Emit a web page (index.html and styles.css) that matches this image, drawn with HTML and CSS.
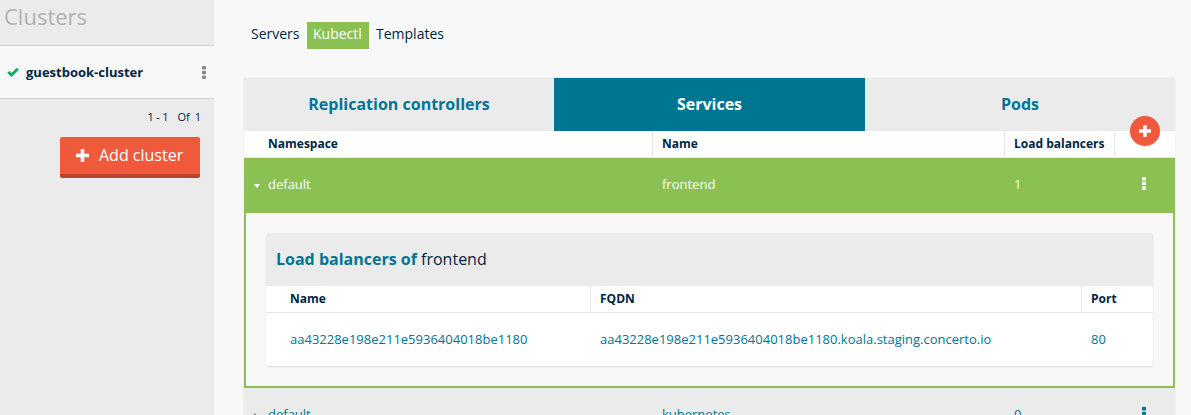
FILE: index.html
```html
<!DOCTYPE html>
<html lang="en">
<head>
<meta charset="utf-8">
<title>Clusters</title>
<link rel="stylesheet" href="styles.css">
</head>
<body>
<div class="app">
  <aside class="sidebar">
    <h1 class="sidebar-title">Clusters</h1>
    <div class="cluster">
      <svg class="check" viewBox="0 0 12 10" width="12" height="10"><path d="M1.2 5 4.5 8.1 10.8 1.7" fill="none" stroke="#0fae68" stroke-width="2.9"/></svg>
      <span class="cluster-name">guestbook-cluster</span>
      <svg class="dots" viewBox="0 0 4 13" width="4" height="13"><path d="M.8 0h2.4l.8.8v1.9l-.8.8H.8L0 2.700V.8zM.8 4.700h2.400l.8.8v1.900l-.8.8H.8L0 7.400V5.500zM.8 9.400h2.400l.8.8v1.900l-.8.8H.8L0 12.100V10.200z"/></svg>
    </div>
    <div class="pager"><span>1 - 1</span><span>Of&nbsp; 1</span></div>
    <button class="add-cluster">
      <svg viewBox="0 0 13 13" width="13" height="13"><path d="M4.700 0h3.600v4.700H13v3.600H8.300V13H4.700V8.300H0V4.700h4.700z" fill="#fff"/></svg>
      <span>Add cluster</span>
    </button>
  </aside>
  <main class="main">
    <nav class="nav">
      <a class="nav-item">Servers</a>
      <a class="nav-item nav-active">Kubectl</a>
      <a class="nav-item">Templates</a>
    </nav>
    <section class="card">
      <div class="tabs">
        <div class="tab">Replication controllers</div>
        <div class="tab tab-active">Services</div>
        <div class="tab">Pods</div>
        <button class="fab" aria-label="Add"><svg viewBox="0 0 12 12" width="12" height="12"><path d="M4.300 0h3.400v4.300H12v3.400H7.700V12H4.300V7.700H0V4.300h4.300z" fill="#fff"/></svg></button>
      </div>
      <div class="services head">
        <div class="cell">Namespace</div><div class="cell">Name</div><div class="cell">Load balancers</div><div class="cell"></div>
      </div>
      <div class="services row row-open">
        <div class="cell"><svg class="caret" viewBox="0 0 6 4" width="6" height="4"><path d="M0 0h6L3 4z" fill="#fff"/></svg>default</div><div class="cell">frontend</div><div class="cell">1</div>
        <div class="cell menu"><svg class="dots" viewBox="0 0 4 13" width="4" height="13"><path d="M.5 0h3l.5.500v2.500l-.5.500h-3L0 3V.500zM.5 4.700h3l.5.500v2.500l-.5.500h-3L0 7.700V5.200zM.5 9.400h3l.5.500v2.500l-.5.500h-3L0 12.400V9.900z"/></svg></div>
      </div>
      <div class="detail">
        <div class="panel">
          <h2 class="panel-title"><b>Load balancers of</b> frontend</h2>
          <div class="balancers head"><div class="cell">Name</div><div class="cell">FQDN</div><div class="cell">Port</div></div>
          <div class="balancers row">
            <div class="cell">aa43228e198e211e5936404018be1180</div><div class="cell">aa43228e198e211e5936404018be1180.koala.staging.concerto.io</div><div class="cell">80</div>
          </div>
        </div>
      </div>
      <div class="services row row-closed">
        <div class="cell"><svg class="caret" viewBox="0 0 4 6" width="4" height="6"><path d="M0 0 4 3 0 6z" fill="#777"/></svg>default</div><div class="cell">kubernetes</div><div class="cell">0</div>
        <div class="cell menu"><svg class="dots" viewBox="0 0 4 13" width="4" height="13"><path d="M.5 0h3l.5.500v2.500l-.5.500h-3L0 3V.500zM.5 4.700h3l.5.500v2.500l-.5.500h-3L0 7.700V5.200zM.5 9.400h3l.5.500v2.500l-.5.500h-3L0 12.400V9.900z"/></svg></div>
      </div>
    </section>
  </main>
</div>
</body>
</html>
```
FILE: styles.css
```css
* { box-sizing: border-box; }
body {
  margin: 0;
  height: 415px;
  overflow: hidden;
  background: #f8f8f8;
  color: #00253f;
  font: 13px/20px "Open Sans", sans-serif;
}
button { border: 0; padding: 0; font: inherit; color: #fff; }
svg { display: block; flex: none; }
.dots { fill: currentColor; }
.app { display: flex; height: 415px; overflow: hidden; }

.sidebar {
  width: 214px;
  flex: none;
  background: #ebebeb;
  display: flex;
  flex-direction: column;
}
.sidebar-title {
  margin: 0;
  height: 45px;
  padding: 1px 0 0 4px;
  font-size: 22px;
  line-height: 30px;
  font-weight: 400;
  color: #b2b2b2;
}
.cluster {
  height: 54px;
  display: flex;
  align-items: center;
  padding: 0 8px 0 7px;
  background: #f8f8f8;
  border-top: 1px solid #cfcfcf;
  border-bottom: 1px solid #cfcfcf;
}
.cluster-name { margin: 0 auto 0 7px; font-weight: 700; }
.cluster .dots { color: #888; }
.pager {
  display: flex;
  justify-content: flex-end;
  gap: 9px;
  padding: 8px 13px 0 0;
  font-size: 11px;
  letter-spacing: -.15px;
}
.add-cluster {
  align-self: flex-end;
  display: flex;
  align-items: center;
  gap: 10px;
  width: 140px;
  height: 41px;
  margin: 10px 14px 0 0;
  padding: 0 0 1px 16px;
  background: #f05a3c;
  border-bottom: 4px solid #b9432d;
  border-radius: 2px;
  font-size: 16px;
}
.add-cluster span { margin-top: -1px; }

.main { flex: 1; padding: 22px 16px 0 30px; }
.nav { display: flex; padding-left: 1px; }
.nav-item { height: 27px; padding: 2px 7px 0 6px; font-size: 14px; }
.nav-item:first-child { width: 62px; }
.nav-item:last-child { padding-left: 7px; }
.nav-active { width: 62px; background: #8bc152; color: #fff; }
.card { margin-top: 29px; box-shadow: 0 0 2px rgba(0, 0, 0, .08); }
.tabs {
  position: relative;
  display: grid;
  grid-template-columns: 310px 311px 310px;
  height: 53px;
  line-height: 53px;
  background: #ebebeb;
  color: #007591;
  font-size: 16px;
  font-weight: 700;
  text-align: center;
}
.tab-active { background: #007591; color: #fff; }
.fab {
  position: absolute;
  right: 15px;
  bottom: -15px;
  width: 30px;
  height: 30px;
  display: grid;
  place-items: center;
  border-radius: 50%;
  background: #f05a3c;
  box-shadow: 0 1px 2px rgba(0, 0, 0, .15);
}
.services { display: grid; grid-template-columns: 408px 352px 110px 61px; }
.services .cell:first-child { padding-left: 24px; }
.cell { padding-left: 9px; }
.head {
  height: 27px;
  background: #fff;
  border-bottom: 1px solid #e8e8e8;
  font-size: 12px;
  font-weight: 700;
  line-height: 26px;
}
.head .cell + .cell { border-left: 1px solid #e8e8e8; }
.row .cell { display: flex; align-items: center; padding-left: 10px; }
.row { color: #007591; }
.row-open, .row-closed { height: 55px; padding-bottom: 4px; }
.services.row .cell:first-child { padding-left: 10px; }
.row-open { background: #8bc152; color: #fff; }
.row-closed { background: #ebebeb; }
.row .caret { margin: 5px 8px 0 0; }
.row-closed .caret { margin-right: 10px; }
.row .menu { padding-left: 28px; }
.detail {
  height: 175px;
  padding: 20px;
  border: 2px solid #8bc152;
  border-top: 0;
  background: #f8f8f8;
}
.panel { border-radius: 3px; overflow: hidden; box-shadow: 0 1px 2px rgba(0, 0, 0, .13); }
.panel-title {
  margin: 0;
  padding-left: 10px;
  height: 53px;
  line-height: 52px;
  background: #ebebeb;
  font-size: 16px;
  font-weight: 400;
}
.panel-title b { color: #007591; }
.balancers { display: grid; grid-template-columns: 324px 491px 1fr; }
.balancers .cell:first-child { padding-left: 24px; }
.balancers.row { height: 53px; padding-bottom: 2px; background: #fff; }
```
